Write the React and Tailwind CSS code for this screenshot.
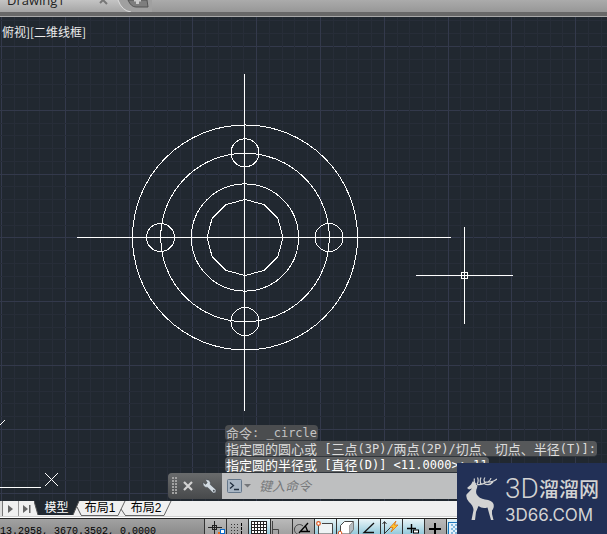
import { useState } from 'react';

const GRID_STEP = 63.8;
const GRID_LINES = Array.from({ length: 140 }, (_, i) => i - 1);

const HISTORY = [
  { text: '命令: _circle', tone: 'text-[#c4c4c4] bg-[#4b4d4f]' },
  { text: '指定圆的圆心或 [三点(3P)/两点(2P)/切点、切点、半径(T)]:', tone: 'text-[#dcdcdc] bg-[#56585a]' },
  { text: '指定圆的半径或 [直径(D)] <11.0000>: 11', tone: 'text-white bg-[#606263]' },
];

function DrawingTabs() {
  return (
    <header className="flex h-3 shrink-0 items-end overflow-hidden bg-linear-to-b from-[#ababab] to-[#979797]">
      <div className="flex h-3 items-end bg-linear-to-b from-[#c4c4c4] to-[#a5a5a5] pl-[7px]">
        <span className="w-[97px] font-['Open_Sans'] text-[13px] leading-6 text-[#222]">Drawing1</span>
        <svg className="h-3 w-12 overflow-visible" viewBox="0 0 48 12" aria-hidden="true">
          <path d="M14 0 Q18 11 27 12 H48 V0Z" fill="#a0a0a0" />
          <path d="M14 0 Q18 11 27 12" fill="none" stroke="#dedede" />
          <path d="M24 0 Q27 7 32 7 H44 L43 0Z" fill="#7e7e7e" stroke="#555" />
          <path d="M30 0 H37 M33.5 -2 V4" stroke="#ccc" strokeWidth="3" />
          <path d="M-4 3 L-1 0 L3 4" fill="none" stroke="#777" strokeWidth="2" />
        </svg>
      </div>
    </header>
  );
}

function Grid() {
  return (
    <g shapeRendering="crispEdges">
      {GRID_LINES.map((i) => {
        const x = Math.round(1 + (i * GRID_STEP) / 5) + 0.5;
        const y = Math.round(29 + ((i - 5) * GRID_STEP) / 5) + 0.5;
        const stroke = i % 5 === 0 ? '#33394b' : '#272d38';
        return (
          <g key={i} stroke={stroke}>
            <line x1={x} x2={x} y1="0" y2="100%" />
            <line x1="0" x2="100%" y1={y} y2={y} />
          </g>
        );
      })}
    </g>
  );
}

function Flange() {
  const inner = Array.from({ length: 12 }, (_, i) => {
    const a = (i * Math.PI) / 6;
    return `${245 + 38 * Math.cos(a)},${220.5 + 38 * Math.sin(a)}`;
  }).join(' ');

  return (
    <g fill="none" stroke="#fff" shapeRendering="crispEdges">
      <path d="M77 220.5 H451 M244.5 57 V394" />
      <circle cx="245" cy="220.5" r="112.5" />
      <circle cx="245" cy="220.5" r="84.3" />
      <circle cx="245" cy="220.5" r="53.6" />
      <polygon points={inner} />
      <circle cx="245" cy="135.8" r="14" />
      <circle cx="245" cy="304.5" r="14" />
      <circle cx="160.5" cy="220.5" r="14" />
      <circle cx="329" cy="220.5" r="14" />
      {/* Cursor */}
      <path d="M416 258.5 H513 M464.5 210 V307" />
      <rect x="461.5" y="255.5" width="6" height="6" />
    </g>
  );
}

function MixedText({ text }) {
  return text.split(/([\x20-\x7e]+)/).filter(Boolean).map((part, i) => (
    <span
      key={i}
      className={
        /^[\x20-\x7e]/.test(part)
          ? "font-['DejaVu_Sans_Mono'] text-[12px] leading-4"
          : "font-['Noto_Sans_CJK_SC'] text-[13px] leading-4"
      }
    >
      {part}
    </span>
  ));
}

function CommandLine() {
  const [command, setCommand] = useState('');

  return (
    <div className="absolute right-0 bottom-0.5 left-[168px]">
      <div className="flex flex-col items-start pl-[57px]">
        {HISTORY.map(({ text, tone }) => (
          <div key={text} className={`flex h-4 items-center rounded-sm border-b border-[#30353b] px-px whitespace-pre ${tone}`}>
            <MixedText text={text} />
          </div>
        ))}
      </div>
      <div className="flex h-[26px] overflow-hidden rounded-l-sm bg-linear-to-b from-[#696b6c] to-[#47494b]">
        <svg className="w-3 shrink-0" viewBox="0 0 12 26" shapeRendering="crispEdges" aria-hidden="true">
          <path d="M5 4 V22 M8 4 V22" transform="translate(-.5 0)" stroke="#a2a2a2" strokeWidth="2" strokeDasharray="2 1" />
        </svg>
        <button type="button" aria-label="关闭" className="flex w-4 items-center justify-center">
          <svg width="10" height="10" viewBox="0 0 10 10">
            <path d="M1 1 L9 9 M9 1 L1 9" stroke="#d3d3d3" strokeWidth="2.2" />
          </svg>
        </button>
        <button type="button" aria-label="自定义" className="flex w-[26px] items-center justify-center">
          <svg width="15" height="15" viewBox="0 0 15 15">
            <path d="M1 3.2 L3.6 5.4 L5.3 3.8 L3.4 .8 Q7.5 .1 8.4 3.7 L8.2 5.5 L13.7 10.4 Q14.8 13.9 11.2 14 L5.7 8.4 Q.9 8.6 1 3.2Z" fill="#d3dbe2" stroke="#353d45" strokeWidth=".4" />
            <circle cx="11.8" cy="11.8" r="1" fill="#4b5258" />
          </svg>
        </button>
        <label htmlFor="command" className="flex flex-1 items-center bg-[#bebfc0] pl-1">
          <svg className="shrink-0" width="27" height="16" viewBox="0 0 27 16" aria-hidden="true">
            <rect x="1.5" y="1.5" width="14" height="13" rx="1" fill="#a9b6c4" stroke="#65778a" />
            <path d="M4 4.5 L7.5 7.5 L4 10.5 M8 11.5 H13" fill="none" stroke="#233040" strokeWidth="1.3" />
            <path d="M18 6 H25 L21.5 9.5Z" fill="#747679" />
          </svg>
          <input
            id="command"
            aria-label="命令"
            value={command}
            onChange={(e) => setCommand(e.target.value)}
            placeholder="键入命令"
            className="ml-1.5 h-5 w-full min-w-0 bg-transparent font-['Noto_Sans_CJK_SC'] text-[13px] leading-5 outline-none placeholder:text-[#77797b] placeholder:italic"
          />
        </label>
      </div>
    </div>
  );
}

function DrawingArea() {
  return (
    <main className="relative min-h-0 flex-1 overflow-hidden bg-[#212830]">
      <svg className="absolute inset-0 h-full w-full" role="img" aria-label="法兰">
        <Grid />
        <Flange />
      </svg>
      <div className="relative ml-0.5 pt-1.5 font-['Noto_Sans_CJK_SC'] text-[12px] leading-[18px] text-[#ececec]">
        俯视][二维线框]
      </div>
      {/* UCS axes */}
      <svg className="absolute bottom-0 left-0" width="60" height="84" viewBox="0 0 60 84" shapeRendering="crispEdges" aria-hidden="true">
        <path d="M0 70.5 H41 M45 56 L58 69 M58 56 L45 69 M0 8 L5 3" fill="none" stroke="#fff" />
      </svg>
      <CommandLine />
    </main>
  );
}

function LayoutTabs() {
  return (
    <nav className="flex h-4 shrink-0 border-b border-[#d0d0d0] bg-[#f0f0f0] font-['Liberation_Sans','Noto_Sans_CJK_SC',sans-serif] text-[12px] leading-[15px] text-black">
      <button type="button" aria-label="上一个" className="w-[3px] border-r border-[#777] bg-[#ddd]" />
      <button type="button" aria-label="下一个" className="flex w-4 items-center justify-center border-r border-[#999]">
        <svg width="6" height="8" viewBox="0 0 6 8"><path d="M0 0 L5 4 L0 8Z" fill="#666" /></svg>
      </button>
      <button type="button" aria-label="最后一个" className="flex w-[15px] items-center justify-center">
        <svg width="8" height="8" viewBox="0 0 8 8"><path d="M0 0 L5 4 L0 8Z M6 0 H7.5 V8 H6Z" fill="#666" /></svg>
      </button>
      <button type="button" className="relative w-[45px] pr-1 pl-1 text-white">
        <svg className="absolute inset-0" width="49" height="15" viewBox="0 0 49 15" aria-hidden="true">
          <path d="M0 0 H45 L39 14 H4Z" fill="#212830" />
          <path d="M0 0 L4 14 M45 0 L39 14 M43 6 L47 14" fill="none" stroke="#555" />
        </svg>
        <span className="relative">模型</span>
      </button>
      <button type="button" className="relative w-[46px] pr-2 pl-1">
        <svg className="absolute inset-0" width="50" height="15" viewBox="0 0 50 15" aria-hidden="true">
          <path d="M2 14.5 H39 L46 0 M42 8 L46 14" fill="none" stroke="#666" />
        </svg>
        <span className="relative">布局1</span>
      </button>
      <button type="button" className="relative w-[46px] pr-2 pl-1">
        <svg className="absolute inset-0" width="47" height="15" viewBox="0 0 47 15" aria-hidden="true">
          <path d="M0 14.5 H39 L46 0" fill="none" stroke="#666" />
        </svg>
        <span className="relative">布局2</span>
      </button>
    </nav>
  );
}

const TOOLS = [
  {
    name: '推断约束',
    icon: (
      <>
        <path d="M3 8.5 H17 M9.5 2 V15" stroke="#222" />
        <rect x="7.5" y="6.5" width="4" height="4" fill="none" stroke="#222" />
        <rect x="15.5" y="10.5" width="4" height="4" fill="#fff" stroke="#0868c8" />
        <path d="M14 15 V13" stroke="#e86a1c" strokeWidth="2" />
      </>
    ),
  },
  {
    name: '捕捉模式',
    icon: (
      <>
        <path d="M4 5.5 H13 M4 8.5 H13 M4 11.5 H13 M4 14.5 H13" stroke="#333" strokeDasharray="1 2" />
        <path d="M14.5 4 V15" stroke="#000" strokeWidth="1" strokeDasharray="3 1" />
      </>
    ),
  },
  {
    name: '栅格显示',
    on: true,
    icon: (
      <>
        <rect x="2" y="2" width="16" height="13" fill="#fff" />
        <path d="M2.5 2 V15 M5.5 2 V15 M8.5 2 V15 M11.5 2 V15 M14.5 2 V15 M17.5 2 V15 M2 2.5 H18 M2 5.5 H18 M2 8.5 H18 M2 11.5 H18 M2 14.5 H18" stroke="#222" />
      </>
    ),
  },
  { name: '正交模式', icon: <path d="M1.5 2 V15 M2 10.5 H7.5 V15" fill="none" stroke="#444" /> },
  {
    name: '极轴追踪',
    icon: (
      <>
        <path d="M10 7 A5 5 0 1 0 7 15.5" fill="none" stroke="#444" />
        <path d="M6 14 L15 4 M8 12.5 H17 M12.5 7 L14.5 12" fill="none" stroke="#000" strokeWidth="1.3" />
      </>
    ),
  },
  {
    name: '对象捕捉',
    on: true,
    icon: (
      <>
        <path d="M3.5 6 V15 H17.5 V4.5 H7" fill="#eef3f5" stroke="#444" />
        <circle cx="3.5" cy="4.5" r="1.8" fill="#fff" stroke="#e2561c" strokeWidth="1.2" />
      </>
    ),
  },
  {
    name: '三维对象捕捉',
    on: true,
    icon: (
      <>
        <path d="M3.5 6.5 L7.5 2.5 H16.5 V10.5 L12.5 15 H3.5Z" fill="#fff" stroke="#444" />
        <path d="M12.5 6.5 L16.5 2.5 V10.5 L12.5 15Z" fill="#b5bcc0" stroke="#777" strokeWidth=".6" />
        <circle cx="3" cy="14" r="1.8" fill="#fff" stroke="#e2561c" />
      </>
    ),
  },
  { name: '对象捕捉追踪', on: true, icon: <path d="M15 4 L5 13.5 H15" fill="none" stroke="#111" strokeWidth="1.3" /> },
  {
    name: '动态 UCS',
    on: true,
    icon: (
      <>
        <path d="M3.5 3 V15 M1.5 5 L3.5 2.5 L5.5 5 M4 14 L10 8" fill="none" stroke="#333" />
        <path d="M15 2 L9 8.5 H12 L10 13 L17 6 H13.5Z" fill="#ffc52c" stroke="#d8660b" strokeWidth=".7" />
      </>
    ),
  },
  {
    name: '动态输入',
    on: true,
    icon: (
      <>
        <path d="M4 9.5 H13 M8.5 5 V14" stroke="#000" strokeWidth="1.4" />
        <rect x="10.5" y="11" width="5" height="3" fill="#fff" stroke="#000" />
      </>
    ),
  },
  { name: '线宽', icon: <path d="M4 10 H16 M10 4 V15" stroke="#000" strokeWidth="2" /> },
  {
    name: '透明度',
    on: true,
    icon: (
      <>
        <rect x="1.5" y="3.5" width="17" height="12" fill="#e5f1fa" stroke="#1b75bb" />
        <path d="M4 6 H18 M4 10 H18 M4 14 H18" stroke="#82b8dd" strokeWidth="2" strokeDasharray="2 2" />
        <path d="M6 8 H18 M6 12 H18" stroke="#82b8dd" strokeWidth="2" strokeDasharray="2 2" />
      </>
    ),
  },
];

function StatusBar() {
  return (
    <footer className="flex h-[17px] shrink-0 items-start overflow-hidden border-t border-white bg-[#222]">
      <div className="mt-px flex h-[15px] w-full bg-linear-to-b from-[#a2a2a2] to-[#8b8b8b]">
        <div className="w-[204px] shrink-0 overflow-hidden pt-[7px] font-['Liberation_Mono'] text-[10px] leading-3 whitespace-pre text-black">
          13.2958, 3670.3502, 0.0000
        </div>
        {TOOLS.map(({ name, on, icon }) => (
          <button
            key={name}
            type="button"
            aria-label={name}
            aria-pressed={Boolean(on)}
            className={`h-[15px] w-[22px] shrink-0 border-l border-[#333] ${on ? 'bg-linear-to-b from-[#e9f5f8] to-[#94cadb]' : 'bg-linear-to-b from-[#bababa] to-[#a1a1a1]'}`}
          >
            <svg width="21" height="15" viewBox="0 0 21 15">{icon}</svg>
          </button>
        ))}
      </div>
    </footer>
  );
}

function Brand() {
  return (
    <a href="#3d66" className="absolute right-0 bottom-0 flex h-[71px] w-[150px] items-center bg-[#223056] pl-2 text-[#d3d3d3]">
      <svg className="mr-2 shrink-0" width="32" height="46" viewBox="0 0 32 46" aria-hidden="true">
        <path d="M2 12 L6 8.5 L8 5 L10.5 8 L12.5 9.5 L12 12 Q10.5 15 11.5 18 Q14 22.5 20 23.5 Q27 24 28.5 28 Q29.5 32 27 34.5 L27 38 L28.5 44 H26 L24 37 L22.5 31.5 Q17 33 13.5 30 L11 36 L10 44 H6.5 L8.5 34 Q8 29 4 26 Q.5 22 1.5 18.5 Q5 15 7 12.5 L4 13.5Z" fill="currentColor" />
        <path d="M11 8.5 Q8.5 6 9.5 2.5 M12 8 Q14 5 12.5 1.5 M12 8.5 Q18 9 21 6 Q28 6.5 32 3 M16 8 Q14.5 5 16 1.5 M20 6.5 Q18 4 20 1.5 M23 6 Q25.5 4.5 26 2 M19 7.5 Q24 10.5 28 6" fill="none" stroke="currentColor" strokeWidth="1.2" />
      </svg>
      <span className="flex flex-col">
        <span className="flex items-center">
          <span className="font-['Roboto'] text-[28px] leading-8 font-light">3D</span>
          <span className="font-['Noto_Sans_CJK_SC'] text-[20px] leading-8 font-medium">溜溜网</span>
        </span>
        <span className="font-['Inter'] text-[17px] leading-5">3D66.COM</span>
      </span>
    </a>
  );
}

export default function App() {
  return (
    <div className="relative flex h-screen flex-col overflow-hidden">
      <DrawingTabs />
      <div className="h-[5px] shrink-0 border-b border-[#a9a9a9] bg-[#686868]" />
      <DrawingArea />
      <LayoutTabs />
      <StatusBar />
      <Brand />
    </div>
  );
}
